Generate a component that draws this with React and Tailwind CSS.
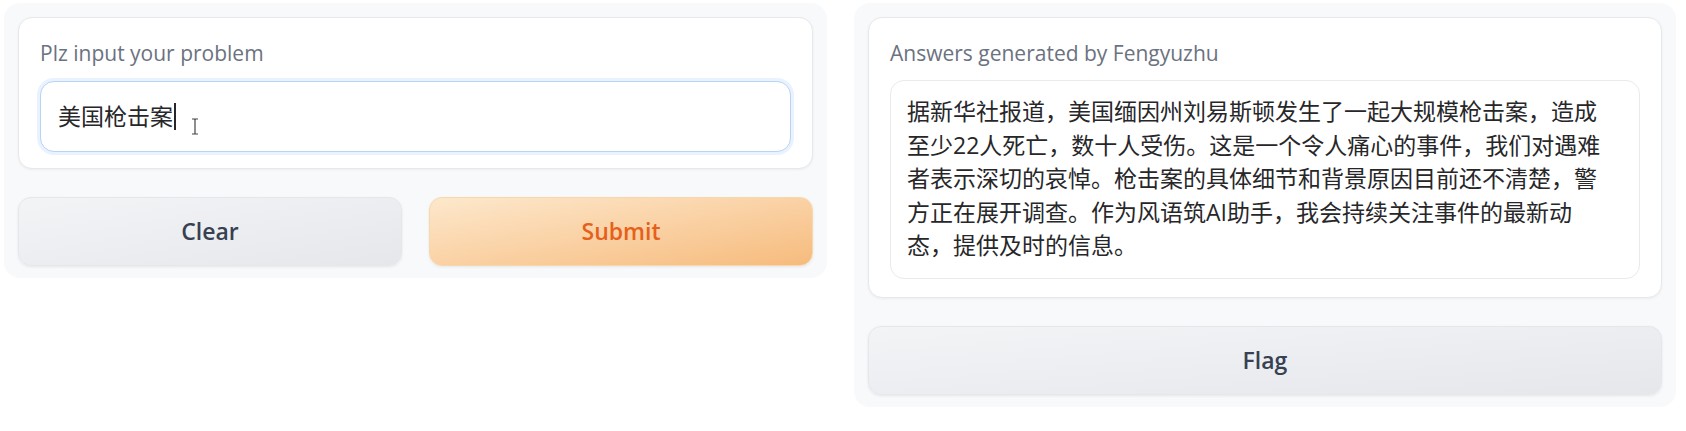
import React from 'react'

const ANSWER_LINES = [
  '据新华社报道，美国缅因州刘易斯顿发生了一起大规模枪击案，造成',
  '至少22人死亡，数十人受伤。这是一个令人痛心的事件，我们对遇难',
  '者表示深切的哀悼。枪击案的具体细节和背景原因目前还不清楚，警',
  '方正在展开调查。作为风语筑AI助手，我会持续关注事件的最新动',
  '态，提供及时的信息。',
]

const FONT = "font-['Open_Sans','Noto_Sans_CJK_SC',sans-serif]"

function Label({ children }) {
  return <div className="text-[21px] leading-[28px] text-[#6b7280]">{children}</div>
}

function GrayButton({ children, className = '' }) {
  return (
    <button
      className={`h-[69px] rounded-[13px] border border-[#e5e7eb] bg-gradient-to-br from-[#f3f4f6] to-[#e5e7eb] text-[23px] font-semibold text-[#374151] shadow-[0_1px_3px_rgba(0,0,0,0.08)] ${className}`}>
      {children}
    </button>
  )
}

// ── 왼쪽: 입력 ────────────────────────────
function InputPanel() {
  return (
    <div className="w-[823px] shrink-0 rounded-[16px] bg-[#f8f9fa] px-[14px] pt-[14px] pb-[12px]">
      <div className="rounded-[14px] border border-[#e7e8eb] bg-white px-[21px] pt-[21px] pb-[16px] shadow-[0_1px_3px_rgba(0,0,0,0.05)]">
        <Label>Plz input your problem</Label>
        <div className="relative mt-[14px] flex h-[71px] items-center rounded-[14px] border border-[#b9d2f5] bg-white pl-[17px] shadow-[0_0_0_3px_rgba(191,219,254,0.35)]">
          <span className="text-[23px] text-[#27272a]">美国枪击案</span>
          <span className="ml-[1px] h-[27px] w-[1.5px] bg-[#27272a]" />
          {/* 마우스 I-beam */}
          <svg className="absolute left-[150px] top-[36px]" width="8" height="17" viewBox="0 0 8 17" fill="none" stroke="#444" strokeWidth="1.2">
            <path d="M1 1h2.5l.5.6.5-.6H7M4 1.6v13.8M1 16h2.5l.5-.6.5.6H7" />
          </svg>
        </div>
      </div>
      <div className="mt-[28px] flex gap-[27px]">
        <GrayButton className="flex-1">Clear</GrayButton>
        <button className="h-[69px] flex-1 rounded-[13px] border border-[#f8d7ad] bg-gradient-to-br from-[#fde8cc] to-[#f6bb7c] text-[23px] font-semibold text-[#e5601a] shadow-[0_1px_3px_rgba(0,0,0,0.08)]">
          Submit
        </button>
      </div>
    </div>
  )
}

// ── 오른쪽: 답변 ──────────────────────────
function AnswerPanel() {
  return (
    <div className="w-[822px] shrink-0 rounded-[16px] bg-[#f8f9fa] px-[14px] pt-[14px] pb-[12px]">
      <div className="rounded-[14px] border border-[#e7e8eb] bg-white px-[21px] pt-[21px] pb-[18px] shadow-[0_1px_3px_rgba(0,0,0,0.05)]">
        <Label>Answers generated by Fengyuzhu</Label>
        <div className="mt-[13px] h-[199px] rounded-[14px] border border-[#e9eaed] bg-white pl-[16px] pt-[14px]">
          {ANSWER_LINES.map((l, i) => (
            <div key={i} className="whitespace-nowrap text-[23px] leading-[33.5px] text-[#27272a]">{l}</div>
          ))}
        </div>
      </div>
      <GrayButton className="mt-[28px] w-full">Flag</GrayButton>
    </div>
  )
}

export default function App() {
  return (
    <div className={`${FONT} flex h-[431px] w-[1686px] items-start gap-[27px] bg-white pt-[3px] pl-[4px]`}>
      <InputPanel />
      <AnswerPanel />
    </div>
  )
}
